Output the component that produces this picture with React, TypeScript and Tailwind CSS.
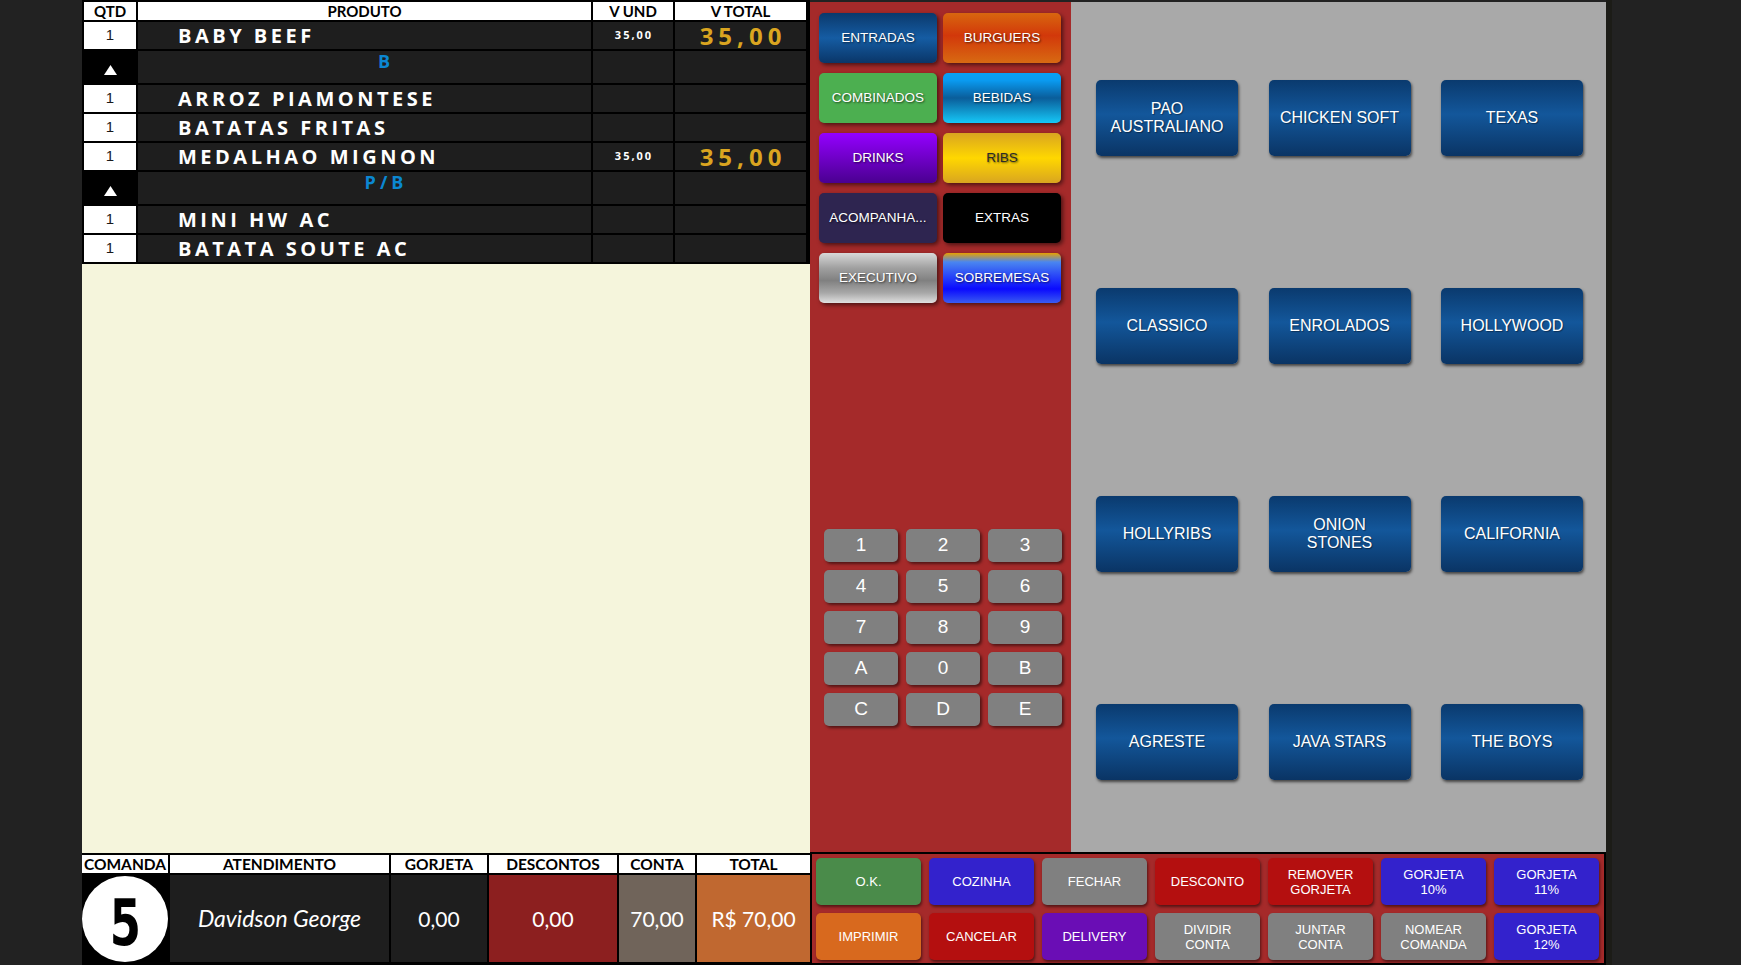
import React from "react";

const ARIAL = "font-['Liberation_Sans',Arial,sans-serif]";

type Item = { kind: "item"; name: string; vund?: string; vtotal?: string } | { kind: "sub"; text: string };

const items: Item[] = [
  { kind: "item", name: "BABY BEEF", vund: "35,00", vtotal: "35,00" },
  { kind: "sub", text: "B" },
  { kind: "item", name: "ARROZ PIAMONTESE" },
  { kind: "item", name: "BATATAS FRITAS" },
  { kind: "item", name: "MEDALHAO MIGNON", vund: "35,00", vtotal: "35,00" },
  { kind: "sub", text: "P/B" },
  { kind: "item", name: "MINI HW AC" },
  { kind: "item", name: "BATATA SOUTE AC" },
];

const cats: { t: string; c: string }[] = [
  { t: "ENTRADAS", c: "bg-[linear-gradient(to_bottom,#0a396c_0%,#155ca3_50%,#0a3668_100%)] text-white" },
  { t: "BURGUERS", c: "bg-[linear-gradient(to_bottom,#d8660f_0%,#d2380a_45%,#d86a12_100%)] text-white" },
  { t: "COMBINADOS", c: "bg-[#4caf50] text-white" },
  { t: "BEBIDAS", c: "bg-[linear-gradient(to_bottom,#0aa0f5_0%,#0a9af0_15%,#0a5d9a_50%,#16c8f7_100%)] text-white" },
  { t: "DRINKS", c: "bg-[linear-gradient(to_bottom,#9400ff_0%,#4a0090_100%)] text-white" },
  { t: "RIBS", c: "bg-[linear-gradient(to_bottom,#d9a520_0%,#ffd700_50%,#d9a520_100%)] text-[#2a2a2a]" },
  { t: "ACOMPANHA...", c: "bg-[#2e2550] text-white" },
  { t: "EXTRAS", c: "bg-black text-white" },
  { t: "EXECUTIVO", c: "bg-[linear-gradient(to_bottom,#d8d8d8_0%,#a0a0a0_30%,#808080_55%,#a8a8a8_80%,#e0e0e0_100%)] text-white" },
  { t: "SOBREMESAS", c: "bg-[linear-gradient(to_bottom,#e8a000_0%,#4a86f0_18%,#0a0aff_72%,#3a5cf0_100%)] text-white" },
];

const keys = ["1", "2", "3", "4", "5", "6", "7", "8", "9", "A", "0", "B", "C", "D", "E"];

const products: string[][] = [
  ["PAO", "AUSTRALIANO"],
  ["CHICKEN SOFT"],
  ["TEXAS"],
  ["CLASSICO"],
  ["ENROLADOS"],
  ["HOLLYWOOD"],
  ["HOLLYRIBS"],
  ["ONION", "STONES"],
  ["CALIFORNIA"],
  ["AGRESTE"],
  ["JAVA STARS"],
  ["THE BOYS"],
];

const actions: { l: string[]; c: string }[] = [
  { l: ["O.K."], c: "bg-[#4a8b4a]" },
  { l: ["COZINHA"], c: "bg-[#3322cc]" },
  { l: ["FECHAR"], c: "bg-[#808080]" },
  { l: ["DESCONTO"], c: "bg-[#b40f0f]" },
  { l: ["REMOVER", "GORJETA"], c: "bg-[#b40f0f]" },
  { l: ["GORJETA", "10%"], c: "bg-[#3322cc]" },
  { l: ["GORJETA", "11%"], c: "bg-[#3322cc]" },
  { l: ["IMPRIMIR"], c: "bg-[#d8691e]" },
  { l: ["CANCELAR"], c: "bg-[#b40f0f]" },
  { l: ["DELIVERY"], c: "bg-[#6a0db5]" },
  { l: ["DIVIDIR", "CONTA"], c: "bg-[#808080]" },
  { l: ["JUNTAR", "CONTA"], c: "bg-[#808080]" },
  { l: ["NOMEAR", "COMANDA"], c: "bg-[#808080]" },
  { l: ["GORJETA", "12%"], c: "bg-[#3322cc]" },
];

function Lines({ l }: { l: string[] }) {
  return (
    <>
      {l.map((s, i) => (
        <React.Fragment key={i}>
          {i > 0 && <br />}
          {s}
        </React.Fragment>
      ))}
    </>
  );
}

function OrderTable() {
  return (
    <div className="bg-black pt-[2px] pl-[2px] pr-[4px] pb-[2px] flex flex-col gap-y-[2px] font-['Open_Sans',sans-serif]">
      <div className="grid grid-cols-[52px_453px_80px_131px] gap-x-[2px] h-[18px] font-['Lato',sans-serif] font-bold text-[15px] leading-[18px] text-black text-center">
        <div className="bg-white">QTD</div>
        <div className="bg-white">PRODUTO</div>
        <div className="bg-white">V UND</div>
        <div className="bg-white">V TOTAL</div>
      </div>
      {items.map((it, i) =>
        it.kind === "item" ? (
          <div key={i} className="grid grid-cols-[52px_453px_80px_131px] gap-x-[2px] h-[27px]">
            <div className={`bg-white flex items-center justify-center text-[15px] text-[#1a1a1a] ${ARIAL}`}>1</div>
            <div className="bg-[#1e1e1e] flex items-center pl-[40px] text-white font-bold text-[20px] tracking-[3.5px] leading-none">
              {it.name}
            </div>
            <div className="bg-[#1e1e1e] flex items-center justify-center pl-[2px] text-white font-bold text-[11px] tracking-[2px]">
              {it.vund ?? ""}
            </div>
            <div className="bg-[#1e1e1e] flex items-center justify-center pl-[5px] text-[#daa520] font-bold text-[24px] tracking-[5px] leading-none">
              {it.vtotal ?? ""}
            </div>
          </div>
        ) : (
          <div key={i} className="grid grid-cols-[52px_453px_80px_131px] gap-x-[2px] h-[32px]">
            <div className="bg-black flex justify-center pt-[14px]">
              <svg width="13" height="10" viewBox="0 0 13 10">
                <polygon points="6.5,0 13,10 0,10" fill="#ffffff" />
              </svg>
            </div>
            <div className="bg-[#1e1e1e] pl-[43px] pt-[1px] text-center text-[#0b87d1] font-bold text-[18px] leading-[18px] tracking-[4px]">
              {it.text}
            </div>
            <div className="bg-[#1e1e1e]" />
            <div className="bg-[#1e1e1e]" />
          </div>
        )
      )}
    </div>
  );
}

function Footer() {
  const heads = ["COMANDA", "ATENDIMENTO", "GORJETA", "DESCONTOS", "CONTA", "TOTAL"];
  return (
    <div className="h-[112px] bg-black pt-[2px] pb-[3px] flex flex-col gap-y-[2px] font-['Lato',sans-serif]">
      <div className="grid grid-cols-[86px_219px_96px_128px_76px_1fr] gap-x-[2px] h-[18px]">
        {heads.map((h) => (
          <div key={h} className="bg-white text-black font-bold text-[15.5px] leading-[18px] text-center overflow-hidden whitespace-nowrap">
            {h}
          </div>
        ))}
      </div>
      <div className="grid grid-cols-[86px_219px_96px_128px_76px_1fr] gap-x-[2px] h-[87px] text-white text-[21px]">
        <div className="bg-black flex items-center justify-center overflow-hidden">
          <div className="w-[86px] h-[86px] shrink-0 rounded-full bg-white flex items-center justify-center">
            <span className="inline-block scale-x-70 text-black font-['DejaVu_Sans',sans-serif] font-bold text-[64px] leading-none mt-[8px]">
              5
            </span>
          </div>
        </div>
        <div className="bg-[#1e1e1e] flex items-center justify-center italic text-[23px]">Davidson George</div>
        <div className="bg-[#1e1e1e] flex items-center justify-center">0,00</div>
        <div className="bg-[#8c1f1f] flex items-center justify-center">0,00</div>
        <div className="bg-[#70645a] flex items-center justify-center">70,00</div>
        <div className="bg-[#c06830] flex items-center justify-center">R$ 70,00</div>
      </div>
    </div>
  );
}

export default function App() {
  return (
    <div className={`w-[1741px] h-[965px] bg-[#222222] flex overflow-hidden ${ARIAL}`}>
      <div className="w-[82px] shrink-0" />
      {/* Left panel */}
      <div className="w-[728px] shrink-0 flex flex-col">
        <OrderTable />
        <div className="flex-1 bg-[#f5f5dc]" />
        <Footer />
      </div>
      {/* Right area */}
      <div className="w-[796px] shrink-0 flex flex-col">
        <div className="h-[852px] flex pt-[2px]">
          {/* Category panel */}
          <div className="w-[261px] shrink-0 bg-[#a52a2a] flex flex-col">
            <div className="grid grid-cols-[118px_118px] auto-rows-[50px] gap-x-[6px] gap-y-[10px] pl-[9px] pt-[11px]">
              {cats.map((c) => (
                <div
                  key={c.t}
                  className={`rounded-[5px] flex items-center justify-center text-[13.5px] whitespace-nowrap shadow-[2px_2px_4px_rgba(0,0,0,0.55)] [text-shadow:1px_1px_2px_rgba(0,0,0,0.6)] ${c.c}`}
                >
                  {c.t}
                </div>
              ))}
            </div>
            <div className="grid grid-cols-[74px_74px_74px] auto-rows-[33px] gap-[8px] pl-[14px] mt-[226px]">
              {keys.map((k) => (
                <div
                  key={k}
                  className="rounded-[5px] bg-[#808080] flex items-center justify-center text-white text-[19px] shadow-[2px_2px_3px_rgba(0,0,0,0.5)]"
                >
                  {k}
                </div>
              ))}
            </div>
          </div>
          {/* Products panel */}
          <div className="flex-1 bg-[#a9a9a9] pt-[78px] pl-[25px] pr-[23px]">
            <div className="grid grid-cols-[142px_142px_142px] justify-between auto-rows-[76px] gap-y-[132px]">
              {products.map((p) => (
                <div
                  key={p.join(" ")}
                  className="rounded-[5px] bg-[linear-gradient(to_bottom,#0a3a6e_0%,#13579b_45%,#0a3464_100%)] flex items-center justify-center text-center text-white text-[16px] leading-[18px] shadow-[1px_2px_3px_rgba(0,0,0,0.6)] [text-shadow:1px_1px_1px_rgba(0,0,0,0.4)]"
                >
                  <span>
                    <Lines l={p} />
                  </span>
                </div>
              ))}
            </div>
          </div>
        </div>
        {/* Bottom action bar */}
        <div className="h-[113px] bg-[#a52a2a] border-2 border-black pt-[4px] pl-[4px]">
          <div className="grid grid-cols-[repeat(7,105px)] auto-rows-[47px] gap-[8px]">
            {actions.map((a) => (
              <div
                key={a.l.join(" ")}
                className={`rounded-[5px] flex items-center justify-center text-center text-white text-[13px] leading-[15px] shadow-[1px_2px_3px_rgba(0,0,0,0.5)] ${a.c}`}
              >
                <span>
                  <Lines l={a.l} />
                </span>
              </div>
            ))}
          </div>
        </div>
      </div>
      <div className="w-[6px] shrink-0 bg-[#1c1c17]" />
    </div>
  );
}
